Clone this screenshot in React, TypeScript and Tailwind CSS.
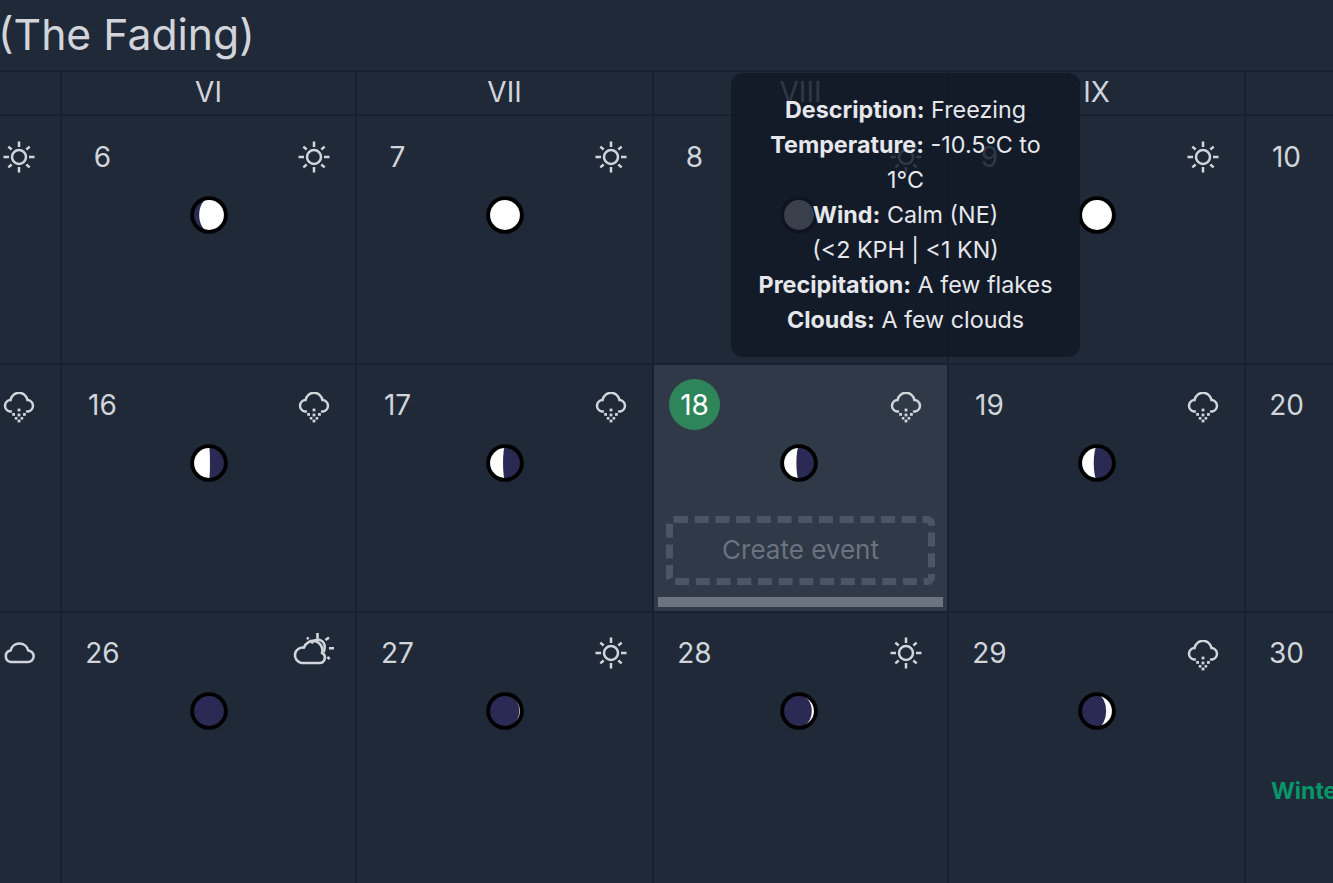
const DARK = "#2a2a55";
const STROKE = "#d1d5db";

function Sun() {
  return (
    <svg viewBox="0 0 32 32" className="w-8 h-8" fill="none" stroke={STROKE} strokeWidth="2.5">
      <circle cx="16" cy="16" r="7" />
      <path d="M16 0.5v5.5M16 26v5.5M0.5 16h5.5M26 16h5.5M5.3 5.6l3.4 2.9M23.3 23.5l3.4 2.9M5.3 26.4l3.4-2.9M23.3 8.5l3.4-2.9" />
    </svg>
  );
}

function Snow() {
  return (
    <svg viewBox="0 0 32 32" className="w-8 h-8 mt-[6px]" fill="none" stroke={STROKE} strokeWidth="2.5" strokeLinecap="round">
      <path d="M8 19.5H6.8a5.8 5.8 0 0 1 0.8-11.5A8.5 8.5 0 0 1 24.4 8a5.8 5.8 0 0 1 0.8 11.5H24" />
      <g fill={STROKE} stroke="none">
        <rect x="14.6" y="16.6" width="2.8" height="2.8" />
        <rect x="14.6" y="21.6" width="2.8" height="2.8" />
        <rect x="14.6" y="27.6" width="2.8" height="2.8" />
        <rect x="9.2" y="21" width="2.8" height="2.8" />
        <rect x="20" y="21" width="2.8" height="2.8" />
        <rect x="11.8" y="25" width="2.6" height="2.6" />
        <rect x="17.6" y="25" width="2.6" height="2.6" />
      </g>
    </svg>
  );
}

function Cloud() {
  return (
    <svg viewBox="0 0 32 32" className="w-8 h-8 -mt-[3px]" fill="none" stroke={STROKE} strokeWidth="2.5" strokeLinejoin="round">
      <path d="M7.5 27h17.2a5.7 5.7 0 0 0 0.5-11.4A9 9 0 0 0 7.6 15.6 5.8 5.8 0 0 0 7.5 27z" />
    </svg>
  );
}

function CloudSun() {
  return (
    <svg viewBox="0 0 42 34" className="w-[42px] h-[34px] shrink-0 -mt-[8px]" fill="none" stroke={STROKE} strokeWidth="2.6">
      <path d="M8.5 31H26.5A5.3 5.3 0 0 0 29 21A9 9 0 0 0 11 15.6A7.8 7.8 0 0 0 8.5 31z" strokeLinejoin="round" />
      <path d="M18.5 11.5A7 7 0 0 1 31.5 16.5 7 7 0 0 1 30.5 20" />
      <path d="M24.5 1v5.5M14 5.5l1.6 1.6M36 5.6l-3.6 2.4M36 16.3h5M34.3 25l2.4 2" />
    </svg>
  );
}

function Moon({ phase }: { phase: number }) {
  // phase in [-1,1]: lit fraction; positive = lit on the right, negative = lit on the left
  const r = 15.5;
  const c = 18;
  const t = Math.abs(phase);
  const side = phase >= 0 ? 1 : 0;
  const big = t > 0.5;
  const rx = Math.abs(1 - 2 * t) * r;
  const d = `M${c} ${c - r} A${r} ${r} 0 0 ${side} ${c} ${c + r} A${rx} ${r} 0 0 ${big ? side : 1 - side} ${c} ${c - r}Z`;
  return (
    <svg viewBox="0 0 36 36" className="w-[38px] h-[38px]">
      <circle cx={c} cy={c} r={r} fill={DARK} />
      <path d={d} fill="#fff" />
      <circle cx={c} cy={c} r={16} fill="none" stroke="#000" strokeWidth="3.7" />
    </svg>
  );
}

type Day = { n: number; icon: "sun" | "snow" | "cloud" | "cloudsun"; moon: number; today?: boolean; extra?: string };

const rows: Day[][] = [
  [
    { n: 5, icon: "sun", moon: 0.75 },
    { n: 6, icon: "sun", moon: 0.8 },
    { n: 7, icon: "sun", moon: 0.98 },
    { n: 8, icon: "sun", moon: 1 },
    { n: 9, icon: "sun", moon: 0.99 },
    { n: 10, icon: "sun", moon: -0.95 },
  ],
  [
    { n: 15, icon: "snow", moon: -0.5 },
    { n: 16, icon: "snow", moon: -0.53 },
    { n: 17, icon: "snow", moon: -0.44 },
    { n: 18, icon: "snow", moon: -0.42, today: true },
    { n: 19, icon: "snow", moon: -0.4 },
    { n: 20, icon: "snow", moon: -0.35 },
  ],
  [
    { n: 25, icon: "cloud", moon: 0.01 },
    { n: 26, icon: "cloudsun", moon: 0.02 },
    { n: 27, icon: "sun", moon: 0.06 },
    { n: 28, icon: "sun", moon: 0.11 },
    { n: 29, icon: "snow", moon: 0.22 },
    { n: 30, icon: "sun", moon: 0.3, extra: "Winter" },
  ],
];

function Weather({ icon }: { icon: Day["icon"] }) {
  if (icon === "sun") return <Sun />;
  if (icon === "snow") return <Snow />;
  if (icon === "cloud") return <Cloud />;
  return <CloudSun />;
}

function Cell({ day, first, top, narrow }: { day: Day; first: boolean; top: boolean; narrow: boolean }) {
  return (
    <div className={`relative flex flex-col border-t-2 border-[#172130] ${first ? "" : "border-l-2"} ${day.today ? "bg-[#2f3947]" : ""} h-full ${top ? "pt-[15px]" : "pt-[14px]"} pl-[15px] pr-[15px]`}>
      <div className="flex items-center justify-between h-[51px]">
        <div className={`w-[51px] h-[51px] rounded-full flex items-center justify-center text-[28px] ${day.today ? "bg-[#2f855a] text-white" : "text-[#d1d5db]"}`}>
          {day.n}
        </div>
        <div className="w-[51px] pr-[2px] flex justify-center">
          <Weather icon={day.icon} />
        </div>
      </div>
      <div className={`flex justify-center mt-[14px] ${narrow ? "pr-[3px]" : "pl-[1px]"}`}>
        <Moon phase={day.moon} />
      </div>
      {day.today && (
        <div className="mt-[34px] -mx-[3px] h-[69px] pb-[2px] border-[7px] border-dashed border-[#4b5563] rounded-lg flex items-center justify-center text-[26px] text-[#6b7280]">
          Create event
        </div>
      )}
      {day.today && <div className="absolute left-[4px] right-[4px] bottom-[4px] h-[10px] bg-[#6b7280]" />}
      {day.extra && (
        <div className="mt-[44px] text-[23px] font-bold text-[#059669] whitespace-nowrap pl-[10px]">{day.extra}</div>
      )}
    </div>
  );
}

const headers = ["V", "VI", "VII", "VIII", "IX", "X"];

export default function App() {
  return (
    <div className="relative w-full h-[883px] overflow-hidden bg-[#1f2937] font-['Inter',sans-serif]">
      <h1 className="h-[70px] -ml-[2px] pt-[9px] text-[42.7px] leading-[52px] text-[#d1d5db] whitespace-nowrap">(The Fading)</h1>
      <div className="grid grid-cols-[296px_295px_297px_295px_297px_296px] grid-rows-[44px_249px_248px_272px] -ml-[236px] w-[1776px]">
        {headers.map((h, i) => (
          <div
            key={h}
            className={`border-t-2 border-[#172130] ${i ? "border-l-2" : ""} pb-[2px] flex items-center justify-center text-[28px] text-[#d1d5db]`}
          >
            {h}
          </div>
        ))}
        {rows.flat().map((d, i) => (
          <Cell key={d.n} day={d} first={i % 6 === 0} top={i < 6} narrow={i % 6 === 3} />
        ))}
      </div>
      <div className="absolute left-[731px] top-[73px] w-[349px] h-[284px] rounded-xl bg-[#111827]/[0.83] px-6 pt-[19px] text-center text-[23.3px] leading-[35px] text-[#e5e7eb]">
        <p><b>Description:</b> Freezing</p>
        <p><b>Temperature:</b> -10.5°C to 1°C</p>
        <p><b>Wind:</b> Calm (NE)<br />(&lt;2 KPH | &lt;1 KN)</p>
        <p><b>Precipitation:</b> A few flakes</p>
        <p><b>Clouds:</b> A few clouds</p>
      </div>
    </div>
  );
}
